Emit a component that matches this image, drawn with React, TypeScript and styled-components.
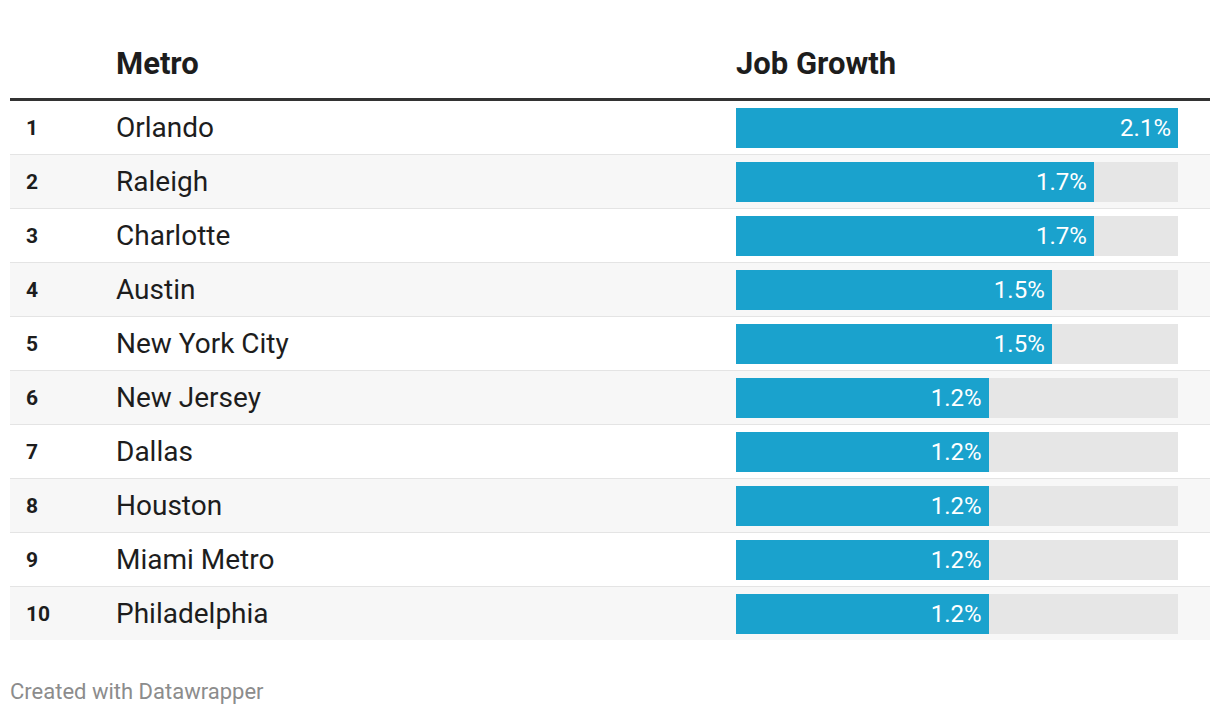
import React from "react";
import styled, { createGlobalStyle } from "styled-components";

const GlobalStyle = createGlobalStyle`
  html, body {
    margin: 0;
    padding: 0;
    background: #ffffff;
  }
  body {
    font-family: Roboto, "Liberation Sans", Arial, sans-serif;
    color: #1d1d1d;
  }
`;

const MAX_VALUE = 2.1;

const rows = [
  { rank: 1, metro: "Orlando", value: 2.1 },
  { rank: 2, metro: "Raleigh", value: 1.7 },
  { rank: 3, metro: "Charlotte", value: 1.7 },
  { rank: 4, metro: "Austin", value: 1.5 },
  { rank: 5, metro: "New York City", value: 1.5 },
  { rank: 6, metro: "New Jersey", value: 1.2 },
  { rank: 7, metro: "Dallas", value: 1.2 },
  { rank: 8, metro: "Houston", value: 1.2 },
  { rank: 9, metro: "Miami Metro", value: 1.2 },
  { rank: 10, metro: "Philadelphia", value: 1.2 },
];

const Page = styled.div`
  width: 1200px;
  padding: 0 10px;
`;

const Table = styled.div`
  display: flex;
  flex-direction: column;
`;

const Columns = styled.div`
  display: grid;
  grid-template-columns: 96px 620px 1fr;
`;

const HeaderRow = styled(Columns)`
  height: 98px;
  align-items: end;
  border-bottom: 3px solid #333333;
`;

const HeaderCell = styled.div`
  font-size: 31px;
  line-height: 36px;
  font-weight: 700;
  color: #1d1d1d;
  padding: 0 10px 16px;
`;

const Row = styled(Columns)<{ $striped: boolean; $first: boolean }>`
  height: 53px;
  align-items: center;
  background: ${(p) => (p.$striped ? "#f7f7f7" : "#ffffff")};
  border-top: ${(p) => (p.$first ? "none" : "1px solid #e4e4e4")};
`;

const Rank = styled.div`
  font-size: 21px;
  font-weight: 700;
  color: #1d1d1d;
  padding-left: 16px;
`;

const Metro = styled.div`
  font-size: 28px;
  color: #1d1d1d;
  padding-left: 10px;
`;

const BarCell = styled.div`
  padding: 0 32px 0 10px;
`;

const Track = styled.div`
  height: 40px;
  background: #e6e6e6;
  display: flex;
`;

const Bar = styled.div`
  height: 100%;
  background: #1aa2cd;
  display: flex;
  align-items: center;
  justify-content: flex-end;
  box-sizing: border-box;
  padding-right: 7px;
`;

const Value = styled.span`
  font-size: 24px;
  color: #ffffff;
`;

const Footer = styled.div`
  margin-top: 39px;
  font-size: 22px;
  color: #8c8c8c;
`;

export default function App() {
  return (
    <>
      <GlobalStyle />
      <Page>
        <Table>
          <HeaderRow>
            <HeaderCell />
            <HeaderCell>Metro</HeaderCell>
            <HeaderCell>Job Growth</HeaderCell>
          </HeaderRow>
          {rows.map((r, i) => (
            <Row key={r.rank} $striped={i % 2 === 1} $first={i === 0}>
              <Rank>{r.rank}</Rank>
              <Metro>{r.metro}</Metro>
              <BarCell>
                <Track>
                  <Bar style={{ width: `${(r.value / MAX_VALUE) * 100}%` }}>
                    <Value>{r.value.toFixed(1)}%</Value>
                  </Bar>
                </Track>
              </BarCell>
            </Row>
          ))}
        </Table>
        <Footer>Created with Datawrapper</Footer>
      </Page>
    </>
  );
}
